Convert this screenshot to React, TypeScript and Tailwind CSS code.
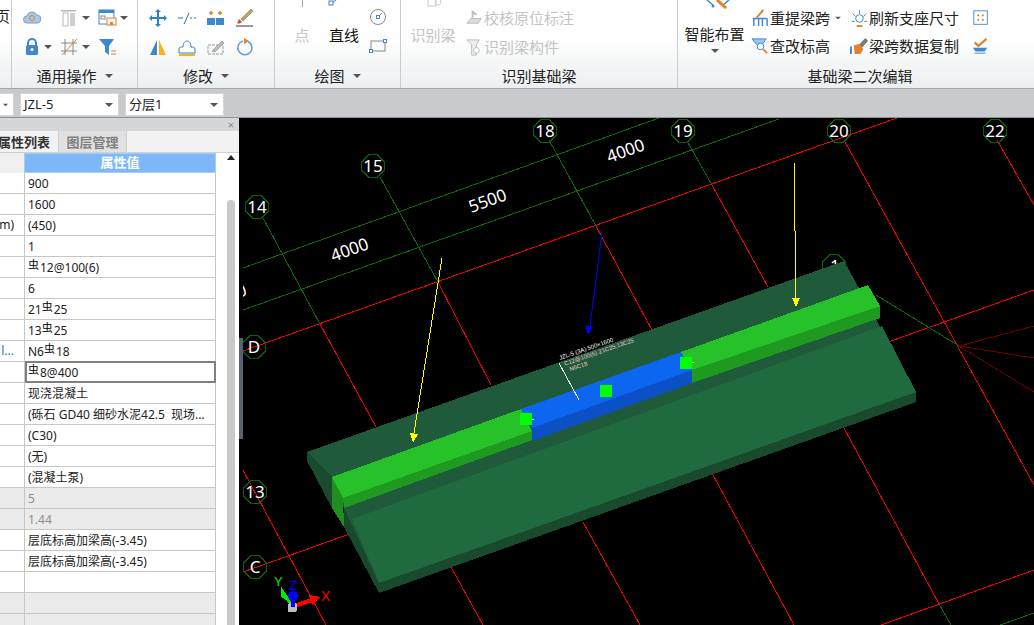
import type { ReactNode } from "react";

const rows: { left?: ReactNode; value?: ReactNode; muted?: boolean; selected?: boolean }[] = [
  { value: "900" },
  { value: "1600" },
  { left: "m)", value: "(450)" },
  { value: "1" },
  { value: <><Bar />12@100(6)</> },
  { value: "6" },
  { value: <>21<Bar />25</> },
  { value: <>13<Bar />25</> },
  { left: <span className="text-[#1a6fe0]">l...</span>, value: <>N6<Bar />18</> },
  { value: <><Bar />8@400</>, selected: true },
  { value: "现浇混凝土" },
  { value: "(砾石 GD40 细砂水泥42.5  现场..." },
  { value: "(C30)" },
  { value: "(无)" },
  { value: "(混凝土泵)" },
  { value: "5", muted: true },
  { value: "1.44", muted: true },
  { value: "层底标高加梁高(-3.45)" },
  { value: "层底标高加梁高(-3.45)" },
  { value: "" },
  { value: "", muted: true },
  { value: "", muted: true },
];

function Bar() {
  return <span className="relative -top-[3px] mr-px text-[11px] text-black">虫</span>;
}

function Caret({ className = "" }: { className?: string }) {
  return (
    <svg width="8" height="4" viewBox="0 0 8 4" className={className}>
      <path d="M0 0h8L4 4z" fill="#555" />
    </svg>
  );
}

function Group({ width, label, caret, children }: { width: string; label: string; caret?: boolean; children: ReactNode }) {
  return (
    <div className={`${width} flex h-full shrink-0 flex-col border-r border-[#c9cdcf]`}>
      <div className="h-[65px] overflow-hidden">{children}</div>
      <div className="flex h-[22px] items-center justify-center gap-2 text-[15px] leading-none text-[#222]">
        {label}
        {caret && <Caret />}
      </div>
    </div>
  );
}

function Icon({ children, size = 20 }: { children: ReactNode; size?: number }) {
  return (
    <svg width={size} height={size} viewBox="0 0 20 20" className="shrink-0">
      {children}
    </svg>
  );
}

const ringPoints = (cx: number, cy: number, r: number) =>
  Array.from({ length: 8 }, (_, i) => {
    const a = Math.PI / 8 + (i * Math.PI) / 4;
    return `${cx + r * Math.cos(a)},${cy + r * Math.sin(a)}`;
  }).join(" ");

const axisLabels: [string, number, number][] = [
  ["14", 257, 207],
  ["15", 373, 166],
  ["18", 545, 131],
  ["19", 683, 131],
  ["20", 839, 131],
  ["22", 995, 131],
  ["D", 254, 347],
  ["13", 255, 492],
  ["C", 255, 567],
];

const redLines = [
  "243,351 897,118",
  "243,572 1034,290",
  "881,625 1034,570",
  "320,324 376,427",
  "451,567 483,625",
  "438,282 491,385",
  "583,522 640,625",
  "596,226 660,345",
  "712,185 768,287",
  "712,473 794,625",
  "844,140 1034,485",
  "844,428 939,604",
  "997,140 1034,205",
  "243,470 326,625",
];

const greenLines = [
  "243,268 659,118",
  "243,310 779,119",
  "263,218 320,324",
  "380,177 438,282",
  "549,140 596,226",
  "687,141 712,185",
  "876,295 959,346",
  "939,604 951,625",
  "1000,625 1034,613",
];

function Viewport() {
  return (
    <svg viewBox="239 118 795 507" className="block h-full w-full bg-black" shapeRendering="crispEdges">
      {redLines.map((p) => (
        <polyline key={p} points={p} stroke="#f00000" strokeWidth="1" fill="none" />
      ))}
      {greenLines.map((p) => (
        <polyline key={p} points={p} stroke="#0b6b0b" strokeWidth="1" fill="none" />
      ))}
      <polyline points="959,346 1034,326" stroke="#6a0000" fill="none" />
      <polyline points="959,346 1034,358" stroke="#6a0000" fill="none" />
      <polyline points="959,346 1034,392" stroke="#6a0000" fill="none" />

      {axisLabels.map(([t, x, y]) => (
        <g key={t}>
          <polygon points={ringPoints(x, y, 12)} fill="none" stroke="#0b5e0b" />
          <text x={x} y={y + 6} textAnchor="middle" fill="#fff" fontSize="17" fontFamily="Noto Sans, sans-serif">
            {t}
          </text>
        </g>
      ))}
      <polygon points={ringPoints(834, 266, 12)} fill="none" stroke="#0b5e0b" />
      <text x="830" y="272" fill="#fff" fontSize="17" fontFamily="Noto Sans, sans-serif">1</text>

      {[
        ["4000", 350, 251],
        ["5500", 488, 202],
        ["4000", 626, 152],
        ["4000", 228, 297],
      ].map(([t, x, y]) => (
        <text
          key={`${t}-${x}`}
          x={x}
          y={y}
          textAnchor="middle"
          fill="#fff"
          fontSize="17"
          fontFamily="Noto Sans, sans-serif"
          transform={`rotate(-20 ${x} ${y})`}
          dominantBaseline="middle"
        >
          {t}
        </text>
      ))}
      {/* the view really starts at x=243, the first 4px stay black */}
      <rect x="239" y="118" width="4" height="507" fill="#000" />

      {/* slab */}
      <polygon points="307,452 307,461 332,508 332,477" fill="#184a2e" />
      <polygon points="344,508 379,583 379,593 344,527" fill="#174a2d" />
      <polygon points="379,583 916,392 916,402 379,593" fill="#194a2d" />
      <polygon points="307,452 844,261 916,392 379,583 344,508 332,477" fill="#1f5a3a" />
      <polygon points="352,519 882,326 916,392 379,583" fill="#206a40" />

      {/* green beam, left and right of the blue span */}
      <polygon points="332,477 343,498 344,527 332,508" fill="#1f8f1f" />
      <polygon points="332,477 521,409 532,431 343,498" fill="#27c22a" />
      <polygon points="343,498 532,431 532,440 344,508" fill="#1f9a20" />
      <polygon points="681,352 868,285 880,306 692,370" fill="#27c22a" />
      <polygon points="692,370 880,306 880,318 692,383" fill="#1f9a20" />

      <polygon points="521,409 681,352 692,370 532,428" fill="#0d66f0" />
      <polygon points="532,428 692,370 692,383 532,441" fill="#0b50c4" />

      <rect x="520" y="413" width="12" height="12" fill="#00ff00" />
      <rect x="600" y="385" width="12" height="12" fill="#00ff00" />
      <rect x="680" y="357" width="12" height="12" fill="#00ff00" />
      <rect x="532" y="419" width="2" height="1" fill="#ffff00" />
      <rect x="692" y="362" width="2" height="1" fill="#ffff00" />

      {/* beam annotation */}
      <polyline points="559,363 579,400" stroke="#e8e8e8" fill="none" />
      <g fontSize="6" fontFamily="Liberation Sans, sans-serif" transform="rotate(-19 560 360)">
        <text x="560" y="360" fill="#fff">JZL-5 (3A) 500×1600</text>
        <text x="563" y="367" fill="#f4c2d4">C12@100(6) 21C25;13C25</text>
        <text x="566" y="374" fill="#f4c2d4">N6C18</text>
      </g>

      {/* arrows */}
      <polyline points="442,258 414,433" stroke="#ffff00" fill="none" />
      <polygon points="410,433 418,434 413,443" fill="#ffff00" />
      <polyline points="794,161 796,298" stroke="#ffff00" fill="none" />
      <polygon points="792,298 800,298 796,307" fill="#ffff00" />
      <polyline points="602,232 590,326" stroke="#0000f0" fill="none" />
      <polygon points="585,325 593,327 588,335" fill="#0000f0" />

      {/* axis gizmo */}
      <polygon points="281,586 281,597 290,602" fill="#00ee00" />
      <polyline points="283,592 292,606" stroke="#00ee00" strokeWidth="3" fill="none" />
      <rect x="288" y="603" width="9" height="9" rx="2" fill="#bdbdbd" />
      <polyline points="293,592 293,607" stroke="#0000ff" strokeWidth="4" fill="none" />
      <circle cx="293" cy="596" r="5" fill="#0000ff" />
      <polyline points="297,605 312,600" stroke="#ff0000" strokeWidth="4" fill="none" />
      <polygon points="309,595 321,597 312,605" fill="#ff0000" />
      <text x="274" y="586" fill="#00ee00" fontSize="13" fontFamily="Liberation Sans, sans-serif">Y</text>
      <text x="289" y="590" fill="#0000ff" fontSize="13" fontFamily="Liberation Sans, sans-serif">Z</text>
      <text x="321" y="601" fill="#ff0000" fontSize="14" fontFamily="Liberation Sans, sans-serif">X</text>
    </svg>
  );
}

function Combo({ width, label }: { width: string; label?: string }) {
  return (
    <div className={`${width} flex h-[23px] items-center justify-between rounded-[1px] border border-[#d6d6d6] bg-white px-[3px] text-[13px] text-[#222]`}>
      <span>{label}</span>
      <Caret className="mr-[2px]" />
    </div>
  );
}

function Ribbon() {
  return (
    <div className="flex h-[89px] items-stretch overflow-hidden border-b border-[#a3a5a8] bg-gradient-to-b from-white from-40% to-[#eceff0]">
      <div className="h-full w-[12px] shrink-0 overflow-hidden border-r border-[#c9cdcf] pt-[9px] text-[15px] leading-none text-[#222]">
        <span className="-ml-[5px] block">页</span>
      </div>

      <Group width="w-[126px]" label="通用操作" caret>
        <div className="grid grid-cols-[38px_38px_38px] pl-[10px] pt-[3px]">
          <div className="flex h-[29px] items-center">
            <Icon>
              <path d="M5 15a3.5 3.5 0 0 1 0-7 5 5 0 0 1 9.5-1A4 4 0 0 1 15 15z" fill="#a9c8e8" stroke="#6d9fd0" />
              <circle cx="10" cy="10" r="2.5" fill="none" stroke="#e2812b" />
            </Icon>
          </div>
          <div className="flex h-[29px] items-center gap-[2px]">
            <Icon>
              <path d="M1 2h15v1.500H1z" fill="#b9b9b9" />
              <rect x="3" y="5" width="5" height="13" fill="none" stroke="#b9b9b9" />
              <rect x="10" y="5" width="5" height="13" fill="#cfcfcf" />
            </Icon>
            <Caret />
          </div>
          <div className="flex h-[29px] items-center gap-[2px]">
            <Icon>
              <rect x="1" y="2" width="15" height="14" fill="#fff" stroke="#3f87cf" />
              <path d="M1 2h15v3H1z" fill="#3f87cf" />
              <rect x="3" y="8" width="4" height="3" fill="none" stroke="#888" />
              <rect x="9" y="10" width="9" height="7" fill="#f6f6f6" stroke="#e2812b" />
              <rect x="12" y="14" width="3" height="3" fill="#e2812b" />
            </Icon>
            <Caret />
          </div>
          <div className="flex h-[29px] items-center gap-[2px]">
            <Icon>
              <path d="M6 9V6a4 4 0 0 1 8 0v3" fill="none" stroke="#3f87cf" strokeWidth="2" />
              <rect x="4" y="8" width="12" height="10" rx="1.500" fill="#3f87cf" />
              <circle cx="10" cy="12.500" r="1.600" fill="#fff" />
            </Icon>
            <Caret />
          </div>
          <div className="flex h-[29px] items-center gap-[2px]">
            <Icon>
              <path d="M5 2v16M13 2v16M1 6h16M1 14h16" stroke="#8a8a8a" fill="none" />
              <path d="M2 18L17 2" stroke="#e2812b" fill="none" />
            </Icon>
            <Caret />
          </div>
          <div className="flex h-[29px] items-center">
            <Icon>
              <path d="M1 2h15l-5 7v9l-4-3V9z" fill="#3f87cf" />
              <path d="M13 14h5M13 17h5" stroke="#e2812b" />
            </Icon>
          </div>
        </div>
      </Group>

      <Group width="w-[137px]" label="修改" caret>
        <div className="grid grid-cols-[29px_29px_29px_29px] pl-[10px] pt-[3px]">
          <div className="flex h-[29px] items-center">
            <Icon>
              <path d="M10 1l3 3h-2v5h5V7l3 3-3 3v-2h-5v5h2l-3 3-3-3h2v-5H4v2l-3-3 3-3v2h5V4H7z" fill="#2f7fd0" />
            </Icon>
          </div>
          <div className="flex h-[29px] items-center">
            <Icon>
              <path d="M1 10h5M13 10h2M17 10h2" stroke="#2f6fb0" fill="none" />
              <path d="M7 16L12 5" stroke="#2f6fb0" fill="none" />
            </Icon>
          </div>
          <div className="flex h-[29px] items-center">
            <Icon>
              <rect x="1" y="10" width="17" height="7" fill="#3f87cf" />
              <path d="M9.500 10v7" stroke="#fff" />
              <path d="M5 3v4M3 5h4M14 3v4M12 5h4" stroke="#e2812b" strokeWidth="1.500" />
            </Icon>
          </div>
          <div className="flex h-[29px] items-center">
            <Icon>
              <path d="M6 11L16 1l2 2L8 13z" fill="#b9a36b" stroke="#776a45" strokeWidth="0.500" />
              <path d="M4 11l3 3-2 1.500H2z" fill="#c9542b" />
              <path d="M1 18h17" stroke="#333" />
            </Icon>
          </div>
          <div className="flex h-[29px] items-center">
            <Icon>
              <path d="M9 3v15H2z" fill="#3f87cf" />
              <path d="M11 3v15h7z" fill="#f4b41a" />
            </Icon>
          </div>
          <div className="flex h-[29px] items-center">
            <Icon>
              <path d="M2 16v-4c0-2 2-2 4-2 0-4 2-6 4-6s4 2 4 6c2 0 4 0 4 2v4z" fill="#fff" stroke="#2f7fd0" />
              <path d="M2 18h16" stroke="#f4b41a" strokeWidth="2" />
            </Icon>
          </div>
          <div className="flex h-[29px] items-center">
            <Icon>
              <path d="M2 8h15v9H2z" fill="none" stroke="#999" strokeDasharray="3 1" />
              <path d="M6 14L16 4l2 2L9 15z" fill="#bbb" stroke="#777" strokeWidth="0.500" />
            </Icon>
          </div>
          <div className="flex h-[29px] items-center">
            <Icon>
              <path d="M8 4a7 7 0 1 0 5 .500" fill="none" stroke="#5ba0e0" strokeWidth="1.500" />
              <path d="M9 1l5 3-5 3z" fill="#e2812b" />
            </Icon>
          </div>
        </div>
      </Group>

      <Group width="w-[126px]" label="绘图" caret>
        <div className="flex">
          <div className="flex w-[54px] shrink-0 flex-col items-center">
            <div className="h-[7px] w-px bg-[#aaa]" />
            <div className="mt-[18px] text-[15px] leading-[20px] text-[#c8c8c8]">点</div>
          </div>
          <div className="flex w-[30px] shrink-0 flex-col items-center">
            <svg width="20" height="10" viewBox="0 0 20 10" className="-ml-[16px] -mt-[3px]">
              <path d="M6 6L14 0" stroke="#4a7fb5" fill="none" />
              <rect x="3" y="4" width="4" height="4" fill="#fff" stroke="#4a7fb5" />
            </svg>
            <div className="mt-[18px] whitespace-nowrap text-[15px] leading-[20px] text-[#111]">直线</div>
          </div>
          <div className="flex flex-col items-center gap-[9px] pl-[9px] pt-[7px]">
            <Icon>
              <circle cx="10" cy="10" r="7.500" fill="none" stroke="#888" />
              <rect x="8.500" y="8.500" width="3" height="3" fill="none" stroke="#3f87cf" />
              <path d="M12 8l2-2" stroke="#888" />
            </Icon>
            <Icon>
              <rect x="3" y="5" width="14" height="10" fill="none" stroke="#888" />
              <rect x="1.500" y="13.500" width="3" height="3" fill="#fff" stroke="#3f87cf" />
              <rect x="15.500" y="3.500" width="3" height="3" fill="#fff" stroke="#3f87cf" />
            </Icon>
          </div>
        </div>
      </Group>

      <Group width="w-[277px]" label="识别基础梁">
        <div className="flex text-[15px] leading-[20px] text-[#c4c4c4]">
          <div className="flex w-[64px] shrink-0 flex-col items-center">
            <svg width="16" height="8" viewBox="0 0 16 8" className="ml-[4px]">
              <rect x="1" y="-4" width="8" height="10" fill="none" stroke="#ccc" />
              <circle cx="11" cy="2" r="3" fill="none" stroke="#ccc" />
            </svg>
            <div className="mt-[17px]">识别梁</div>
          </div>
          <div className="flex flex-col gap-[9px] pt-[8px]">
            <div className="flex items-center">
              <Icon size={19}>
                <path d="M2 15h12l3-5H6z" fill="#ddd" stroke="#bbb" />
                <path d="M8 9V3l4 3" fill="none" stroke="#bbb" strokeWidth="2" />
              </Icon>
              校核原位标注
            </div>
            <div className="flex items-center">
              <Icon size={19}>
                <path d="M2 2h13l-3 5v11H7V7z" fill="#eee" stroke="#bbb" />
                <circle cx="12" cy="13" r="3" fill="#fff" stroke="#bbb" />
              </Icon>
              识别梁构件
            </div>
          </div>
        </div>
      </Group>

      <div className="flex h-full flex-1 flex-col">
        <div className="flex h-[65px] overflow-hidden text-[15px] leading-[20px] text-[#222]">
          <div className="flex w-[73px] shrink-0 flex-col items-center">
            <svg width="30" height="9" viewBox="0 0 30 9" className="ml-[8px]">
              <path d="M3 0l6 5M25 0l-6 5" stroke="#3f87cf" strokeWidth="1.500" fill="none" />
              <path d="M13 0l9 8" stroke="#e2812b" strokeWidth="3" fill="none" />
              <circle cx="9" cy="6" r="1.500" fill="#3f87cf" />
            </svg>
            <div className="mt-[15px] whitespace-nowrap">智能布置</div>
            <Caret className="mt-[5px]" />
          </div>
          <div className="grid grid-cols-[99px_122px_auto] content-start gap-y-[8px] pt-[8px]">
            <div className="flex items-center">
              <Icon size={19}>
                <path d="M2 10h15M3 10v8M8 10v8M12 10v8M17 10v8" stroke="#3f87cf" strokeWidth="1.500" fill="none" />
                <path d="M6 9L13 1" stroke="#e2812b" strokeWidth="2" />
              </Icon>
              重提梁跨
              <Caret className="ml-[4px] scale-75" />
            </div>
            <div className="flex items-center">
              <Icon size={19}>
                <circle cx="10" cy="10" r="4" fill="none" stroke="#3f87cf" />
                <path d="M10 1v4M3 5l3 3M17 5l-3 3M2 13h3M15 13h3" stroke="#3f87cf" />
                <path d="M7 18h6" stroke="#e2812b" strokeWidth="2" />
              </Icon>
              刷新支座尺寸
            </div>
            <div className="flex items-center">
              <Icon size={18}>
                <rect x="2" y="2" width="15" height="15" fill="#fff" stroke="#3f87cf" />
                <rect x="6" y="6" width="2" height="2" fill="#e2812b" />
                <rect x="11" y="6" width="2" height="2" fill="#e2812b" />
                <rect x="6" y="11" width="2" height="2" fill="#e2812b" />
                <rect x="11" y="11" width="2" height="2" fill="#e2812b" />
              </Icon>
            </div>
            <div className="flex items-center">
              <Icon size={19}>
                <path d="M1 2h15l-5 7v3H7V9z" fill="#9cc3ea" stroke="#3f87cf" />
                <circle cx="10" cy="10" r="3.500" fill="#fff" stroke="#3f87cf" />
                <path d="M13 13l4 4" stroke="#e2812b" strokeWidth="2" />
              </Icon>
              查改标高
            </div>
            <div className="flex items-center">
              <Icon size={19}>
                <path d="M9 9l7-8 3 3-7 8z" fill="#777" />
                <path d="M4 9l6-2 4 6-3 5H5z" fill="#e2812b" />
                <path d="M1 18V10" stroke="#3f87cf" strokeWidth="2" />
              </Icon>
              梁跨数据复制
            </div>
            <div className="flex items-center">
              <Icon size={18}>
                <path d="M3 6l4 4 9-8" fill="none" stroke="#e2812b" strokeWidth="2.500" />
                <path d="M1 12h16l-3 4H4z" fill="#3f87cf" />
                <path d="M3 18h12" stroke="#3f87cf" />
              </Icon>
            </div>
          </div>
        </div>
        <div className="flex h-[22px] items-center justify-center pl-[8px] text-[15px] leading-none text-[#222]">
          基础梁二次编辑
        </div>
      </div>
    </div>
  );
}

function PropertyPanel() {
  return (
    <div className="flex h-full w-[239px] shrink-0 flex-col overflow-hidden bg-white text-[12px] text-[#222]">
      <div className="flex h-[13px] shrink-0 items-center justify-end bg-[#d4d6d9] pr-[5px] text-[11px] leading-none text-[#888]">×</div>
      <div className="flex h-[22px] shrink-0 border-b border-[#cfcfcf] bg-[#f2f2f2] text-[13px] font-bold">
        <div className="flex w-[58px] justify-end overflow-hidden whitespace-nowrap pr-[8px] leading-[22px] text-[#333]">属性列表</div>
        <div className="flex w-[69px] justify-center border-x border-[#cfcfcf] bg-[#e1e1e1] leading-[22px] text-[#808080]">图层管理</div>
      </div>
      <div className="flex min-h-0 flex-1">
        <div className="w-[216px] shrink-0">
          <div className="flex h-[20px]">
            <div className="w-[24px] bg-[#f0f0f0]" />
            <div className="flex w-[192px] items-center justify-center border border-[#a8cdf5] bg-[#7eb8f8] text-[13px] font-bold text-white">属性值</div>
          </div>
          {rows.map((r, i) => (
            <div key={i} className={`flex h-[21px] border-b border-[#c6c6c6] ${r.muted ? "bg-[#ebebeb]" : ""}`}>
              <div className="flex w-[25px] shrink-0 items-center justify-end overflow-hidden border-r border-[#c6c6c6] pr-[10px] whitespace-nowrap">{r.left}</div>
              <div
                className={`flex min-w-0 flex-1 items-center overflow-hidden whitespace-pre pt-px ${r.muted ? "text-[#8e8e8e]" : ""} ${
                  r.selected ? "-mt-px h-[22px] border-2 border-[#808080] pl-[1px]" : "border-r border-[#c6c6c6] pl-[3px]"
                }`}
              >
                <span className="block">{r.value}</span>
              </div>
            </div>
          ))}
        </div>
        <div className="w-[11px] shrink-0" />
        <div className="flex w-[8px] shrink-0 flex-col items-center pt-[2px]">
          <svg width="8" height="5" viewBox="0 0 8 5" className="shrink-0">
            <path d="M0 5h8L4 0z" fill="#222" />
          </svg>
          <div className="mt-[40px] w-full flex-1 rounded-t-[4px] bg-[#c9c9c9]" />
        </div>
      </div>
    </div>
  );
}

export default function App() {
  return (
    <div className="flex h-[625px] w-[1034px] flex-col overflow-hidden font-['Noto_Sans','Noto_Sans_CJK_SC',sans-serif]">
      <Ribbon />
      <div className="flex h-[29px] shrink-0 items-start gap-[6px] border-b border-[#8f9194] bg-[#c8cacd] pt-[4px]">
        <Combo width="w-[15px] -ml-px" />
        <Combo width="w-[99px]" label="JZL-5" />
        <Combo width="w-[99px]" label="分层1" />
      </div>
      <div className="flex min-h-0 flex-1">
        <PropertyPanel />
        <div className="relative min-w-0 flex-1 bg-black">
          <Viewport />
          <div className="absolute left-0 top-[220px] h-[101px] w-[4px] bg-[#59636f]" />
        </div>
      </div>
    </div>
  );
}
